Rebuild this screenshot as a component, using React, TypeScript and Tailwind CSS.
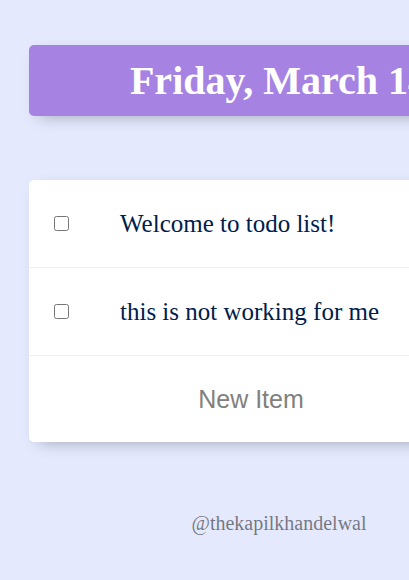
export default function App() {
  const items = ['Welcome to todo list!', 'this is not working for me']

  return (
    <div className="min-h-[580px] w-full overflow-hidden bg-[#E4E9FD] pt-[45px] font-['Liberation_Serif',serif]">
      <div className="ml-[29px] w-[500px]">
        <div className="flex h-[71px] items-center justify-center rounded-[5px] bg-[#A683E3] shadow-[5px_5px_15px_-5px_rgba(0,0,0,0.3)]">
          <h1 className="whitespace-nowrap text-[40px] font-bold text-white">Friday, March 14</h1>
        </div>

        <div className="mt-[64px] rounded-[5px] bg-white shadow-[5px_5px_15px_-5px_rgba(0,0,0,0.3)]">
          {items.map(item => (
            <div key={item} className="flex h-[88px] items-center border-b border-[#F1F1F1]">
              <input type="checkbox" className="ml-[25px] h-[15px] w-[15px]" />
              <p className="ml-[51px] text-[25px] text-[#00204a]">{item}</p>
            </div>
          ))}
          <div className="flex h-[86px] items-center">
            <input
              type="text"
              placeholder="New Item"
              className="ml-[20px] h-[60px] w-[404px] bg-transparent text-center font-['Liberation_Sans',sans-serif] text-[25px] placeholder:text-[#808080] focus:outline-none"
            />
          </div>
        </div>

        <footer className="mt-[66px] text-center text-[20px] text-black/50">@thekapilkhandelwal</footer>
      </div>
    </div>
  )
}
